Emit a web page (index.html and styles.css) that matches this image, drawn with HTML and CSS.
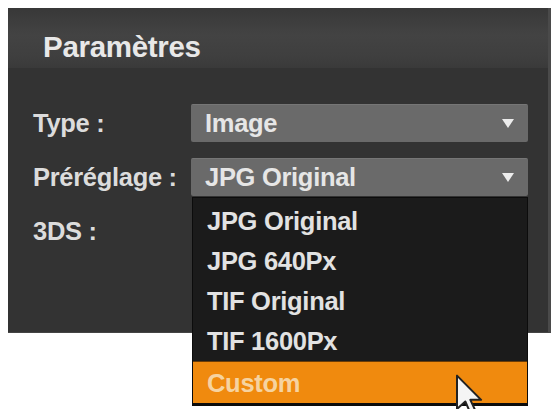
FILE: index.html
```html
<!DOCTYPE html>
<html lang="fr">
<head>
<meta charset="utf-8">
<title>Paramètres</title>
<link rel="stylesheet" href="styles.css">
</head>
<body>
<div class="panel">
  <div class="panel-header">Paramètres</div>
  <div class="panel-body">
    <div class="row">
      <div class="label">Type :</div>
      <div class="select"><span>Image</span><i class="arrow"></i></div>
    </div>
    <div class="row">
      <div class="label">Préréglage :</div>
      <div class="select-wrap">
        <div class="select"><span>JPG Original</span><i class="arrow"></i></div>
        <ul class="dropdown">
          <li>JPG Original</li>
          <li>JPG 640Px</li>
          <li>TIF Original</li>
          <li>TIF 1600Px</li>
          <li class="active">Custom</li>
        </ul>
      </div>
    </div>
    <div class="row">
      <div class="label">3DS :</div>
    </div>
  </div>
</div>
<svg class="cursor" width="34" height="50" viewBox="0 0 20 30" aria-hidden="true">
  <path d="M1 1 L1 21 L6 16.5 L9.5 24.5 L12.5 23 L9 15.5 L15.5 15.5 Z" fill="#f4f4f4" stroke="#222" stroke-width="1.2" stroke-linejoin="round"/>
</svg>
</body>
</html>
```
FILE: styles.css
```css
html, body {
  margin: 0;
  padding: 0;
  background: #ffffff;
}
body {
  width: 554px;
  height: 409px;
  overflow: hidden;
  position: relative;
  font-family: "Liberation Sans", Arial, sans-serif;
}
.panel {
  margin: 8px 0 0 8px;
  width: 540px;
  height: 324px;
  background: #333333;
  border-right: 3px solid #4a4a4a;
  border-bottom: 1px solid #444;
  box-sizing: content-box;
}
.panel-header {
  height: 60px;
  box-sizing: border-box;
  padding: 23px 0 0 35px;
  background: linear-gradient(to bottom, #383838 0%, #434343 45%, #3f3f3f 80%, #3a3a3a 100%);
  color: #e8e8e8;
  font-weight: bold;
  font-size: 29.5px;
  line-height: 32px;
  letter-spacing: -0.3px;
}
.panel-body {
  padding: 36px 0 0 25px;
  display: flex;
  flex-direction: column;
  gap: 16px;
}
.row {
  display: flex;
  align-items: center;
  height: 38px;
}
.label {
  width: 158px;
  color: #dcdcdc;
  font-weight: bold;
  font-size: 25.5px;
  letter-spacing: -0.3px;
}
.select-wrap {
  position: relative;
}
.select {
  width: 337px;
  height: 38px;
  box-sizing: border-box;
  background: #6a6a6a;
  border-radius: 2px;
  border-top: 1px solid #767676;
  display: flex;
  align-items: center;
  justify-content: space-between;
  padding: 0 14px 0 14px;
  color: #e6e6e6;
  font-weight: bold;
  font-size: 25.5px;
  letter-spacing: -0.3px;
}
.arrow {
  width: 0;
  height: 0;
  border-left: 6px solid transparent;
  border-right: 6px solid transparent;
  border-top: 9px solid #ececec;
}
.dropdown {
  position: absolute;
  top: 39px;
  left: 1px;
  width: 336px;
  box-sizing: border-box;
  margin: 0;
  padding: 3px 0 0 0;
  list-style: none;
  background: #1b1b1b;
  border: 1px solid #0c0c0c;
  border-bottom-width: 3px;
}
.dropdown li {
  height: 40px;
  line-height: 40px;
  padding-left: 14px;
  color: #e2e2e2;
  font-weight: bold;
  font-size: 25.5px;
  letter-spacing: -0.3px;
}
.dropdown li.active {
  height: 42px;
  line-height: 42px;
  background: #f08a0e;
  color: #f6d3a0;
  border-top: 1px solid #6b3c06;
  box-sizing: border-box;
}
.cursor {
  position: absolute;
  left: 455px;
  top: 374px;
}
```
